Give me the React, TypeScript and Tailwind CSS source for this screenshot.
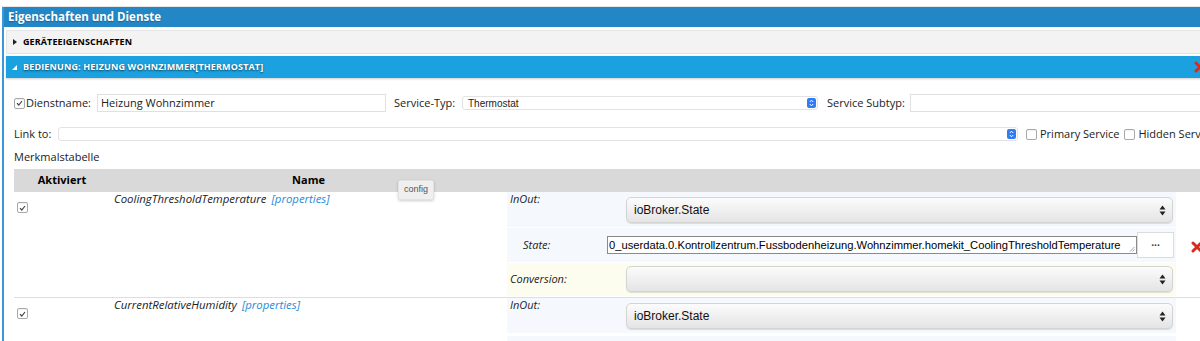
import React from "react"

function MacCheck({ checked = false }: { checked?: boolean }) {
  return (
    <span className="inline-flex w-[11px] h-[11px] shrink-0 items-center justify-center rounded-[2px] border border-[#a8a8a8] bg-white shadow-[inset_0_1px_1px_rgba(0,0,0,0.06)]">
      {checked && (
        <svg width="7" height="6" viewBox="0 0 7 6">
          <path d="M1 3.2 L2.8 5 L6 1" fill="none" stroke="#444" strokeWidth="1.2" />
        </svg>
      )}
    </span>
  )
}

function BlueArrows() {
  return (
    <span className="inline-flex w-[9px] h-[10px] items-center justify-center rounded-[2px] bg-[#2f7cf6]">
      <svg width="5" height="8" viewBox="0 0 5 8">
        <path d="M0.8 3 L2.5 1.2 L4.2 3 M0.8 5 L2.5 6.8 L4.2 5" fill="none" stroke="#fff" strokeWidth="1" />
      </svg>
    </span>
  )
}

function UpDown() {
  return (
    <svg width="7" height="11" viewBox="0 0 7 11">
      <path d="M3.5 0.5 L6.5 4.5 L0.5 4.5 Z M3.5 10.5 L6.5 6.5 L0.5 6.5 Z" fill="#222" />
    </svg>
  )
}

function RedX() {
  return (
    <svg width="12" height="12" viewBox="0 0 12 12">
      <path d="M2 2 L10 10 M10 2 L2 10" stroke="#d62b1f" strokeWidth="3" strokeLinecap="round" />
    </svg>
  )
}

function GraySelect({ value }: { value?: string }) {
  return (
    <div className="flex h-[26px] items-center justify-between rounded-[5px] border border-[#d4d4d4] bg-gradient-to-b from-[#fcfcfc] to-[#e4e4e4] pl-[7px] pr-[6px] shadow-[0_1px_1px_rgba(0,0,0,0.12)] font-['Liberation_Sans',Arial,sans-serif] text-[12px] text-[#111]">
      <span>{value}</span>
      <UpDown />
    </div>
  )
}

interface Characteristic {
  name: string
  withState: boolean
}

const characteristics: Characteristic[] = [
  { name: "CoolingThresholdTemperature", withState: true },
  { name: "CurrentRelativeHumidity", withState: false },
]

function ConfigCell({ withState }: { withState: boolean }) {
  return (
    <div className="flex flex-col">
      {/* InOut */}
      <div className="flex h-[35px] bg-[#f5f9fd]">
        <div className="w-[119px] pl-[3px] italic text-[11px] leading-[13px] text-[#222]">InOut:</div>
        <div className="flex-1 pt-[5px] pr-[3px]">
          <GraySelect value="ioBroker.State" />
        </div>
      </div>
      {withState && (
        <>
          <div className="mt-[1px] flex h-[34px] items-center bg-[#f5f9fd]">
            <div className="w-[100px] pl-[16px] italic text-[11px] text-[#222]">State:</div>
            <div className="relative flex h-[18px] w-[530px] items-center border border-[#8a8a8a] bg-white pl-[1px] font-['Liberation_Sans',Arial,sans-serif] text-[11.2px] text-black whitespace-nowrap overflow-hidden">
              0_userdata.0.Kontrollzentrum.Fussbodenheizung.Wohnzimmer.homekit_CoolingThresholdTemperature
              <svg className="absolute right-[1px] bottom-[1px]" width="6" height="6" viewBox="0 0 6 6">
                <path d="M1 5.5 L5.5 1 M3.5 5.5 L5.5 3.5" stroke="#888" strokeWidth="0.8" />
              </svg>
            </div>
            <div className="flex h-[26px] w-[37px] items-center justify-center border border-[#dcdcdc] bg-white text-[10px] font-bold leading-none text-[#333]">
              ···
            </div>
          </div>
          <div className="mt-[1px] flex h-[33px] bg-[#fcfcef]">
            <div className="w-[119px] flex items-end pb-[9px] pl-[3px] italic text-[11px] text-[#222]">Conversion:</div>
            <div className="flex-1 pt-[3px] pr-[3px]">
              <GraySelect />
            </div>
          </div>
        </>
      )}
      {!withState && <div className="mt-[3px] h-[20px] bg-[#f5f9fd]" />}
    </div>
  )
}

export default function App() {
  return (
    <div className="w-[1200px] h-[341px] overflow-hidden bg-white font-['Open_Sans',sans-serif] text-[#222]">
      <div className="mt-[6px] ml-[2px] w-[1240px] border-t border-[#e6e6e6]">
        <div className="border-l-2 border-[#3a98d8]">
          {/* Title */}
          <div className="flex h-[20px] items-center bg-[#2386c5] pl-[4px] text-[11.5px] font-bold text-white [text-shadow:0_1px_1px_rgba(0,0,0,0.25)]">
            Eigenschaften und Dienste
          </div>

          <div className="pl-[2px] pt-[3px]">
            {/* Device properties */}
            <div className="flex h-[24px] items-center gap-[6px] border border-[#e4e4e4] bg-[#f3f3f3] pl-[6px] text-[9px] font-bold uppercase tracking-[0.1px] text-black">
              <svg width="4" height="6" viewBox="0 0 4 6">
                <path d="M0 0 L4 3 L0 6 Z" fill="#222" />
              </svg>
              Geräteeigenschaften
            </div>

            {/* Service accordion header */}
            <div className="mt-[2px] flex h-[22px] items-center gap-[6px] bg-[#1ca1e0] pl-[6px] text-[9px] font-bold uppercase tracking-[0.15px] text-white [text-shadow:0_1px_2px_rgba(0,0,0,0.6)] shadow-[0_1px_2px_rgba(0,0,0,0.2)]">
              <svg width="5" height="5" viewBox="0 0 5 5">
                <path d="M5 0 L5 5 L0 5 Z" fill="#fff" />
              </svg>
              <span className="flex-1">Bedienung: Heizung Wohnzimmer[Thermostat]</span>
              <span className="mr-[36px]">
                <RedX />
              </span>
            </div>

            <div className="pl-[8px]">
              {/* Service name row */}
              <div className="mt-[15px] flex h-[20px] items-center text-[11px]">
                <MacCheck checked />
                <span className="ml-[1px] w-[71px]">Dienstname:</span>
                <div className="flex h-[18px] w-[289px] items-center border border-[#e0e0e0] bg-white pl-[3px] text-[11px]">
                  Heizung Wohnzimmer
                </div>
                <span className="ml-[8px] w-[68px]">Service-Typ:</span>
                <div className="flex h-[14px] w-[356px] items-center justify-between rounded-[3px] border border-[#e3e3e3] bg-white pl-[5px] pr-[1px] font-['Liberation_Sans',Arial,sans-serif] text-[10px] text-[#222]">
                  Thermostat
                  <BlueArrows />
                </div>
                <span className="ml-[9px] w-[83px]">Service Subtyp:</span>
                <div className="h-[18px] w-[320px] border border-[#e0e0e0] bg-white" />
              </div>

              {/* Link row */}
              <div className="mt-[11px] flex h-[20px] items-center text-[11px]">
                <span className="w-[44px]">Link to:</span>
                <div className="flex h-[14px] w-[960px] items-center justify-end rounded-[3px] border border-[#e3e3e3] bg-white pr-[1px]">
                  <BlueArrows />
                </div>
                <span className="ml-[8px] flex items-center gap-[3px]">
                  <MacCheck />
                  Primary Service
                </span>
                <span className="ml-[5px] flex items-center gap-[3px] whitespace-nowrap">
                  <MacCheck />
                  Hidden Service
                </span>
              </div>

              <div className="mt-[4px] flex h-[18px] items-center text-[11px]">Merkmalstabelle</div>

              {/* Characteristics table */}
              <div className="relative mt-[3px]">
                <div className="flex h-[23px] items-center bg-[#d9d9d9] text-[11px] font-bold text-black">
                  <div className="w-[96px] text-center">Aktiviert</div>
                  <div className="w-[397px] text-center">Name</div>
                </div>

                {characteristics.map((c, i) => (
                  <div
                    key={c.name}
                    className={`flex ${i > 0 ? "border-t border-[#dedede]" : ""} ${c.withState ? "pb-[1px]" : ""}`}
                  >
                    <div className="flex w-[96px] items-start pl-[3px] pt-[10px]">
                      <MacCheck checked />
                    </div>
                    <div className="w-[397px] pl-[4px] text-[11.4px] italic leading-[13px]">
                      <span>{c.name}</span>
                      <span className="ml-[5px] text-[#2a8ad8]">[properties]</span>
                    </div>
                    <div className="w-[669px]">
                      <ConfigCell withState={c.withState} />
                    </div>
                    <div className="flex w-[40px] items-start pl-[15px] pt-[49px]">
                      {c.withState && <RedX />}
                    </div>
                  </div>
                ))}

                {/* tooltip */}
                <div className="absolute left-[384px] top-[11px] rounded-[2px] border border-[#e2e2e2] bg-[#efefef] px-[5px] py-[2px] font-['Liberation_Sans',Arial,sans-serif] text-[9px] text-[#555] shadow-[0_1px_3px_rgba(0,0,0,0.2)]">
                  config
                </div>
              </div>
            </div>
          </div>
        </div>
      </div>
    </div>
  )
}
